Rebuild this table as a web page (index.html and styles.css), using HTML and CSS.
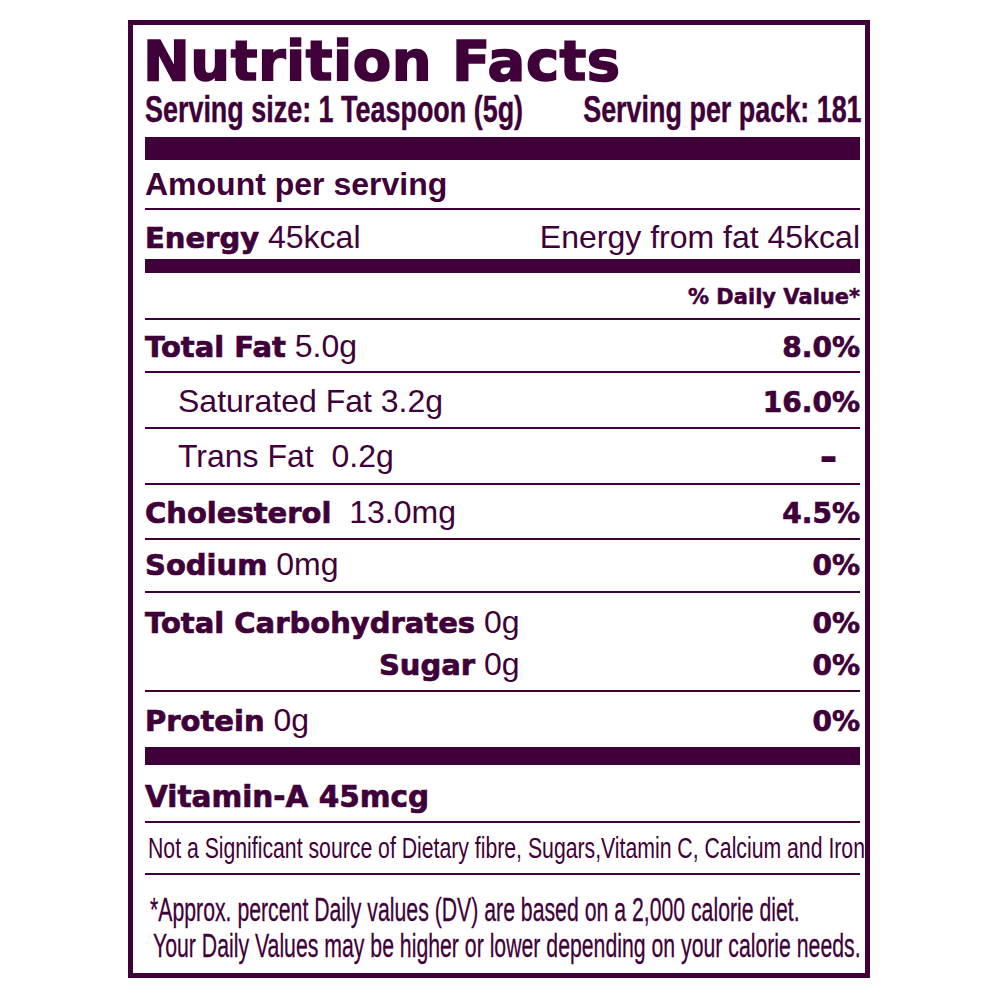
FILE: index.html
```html
<!DOCTYPE html>
<html lang="en">
<head>
<meta charset="utf-8">
<title>Nutrition Facts</title>
<link rel="stylesheet" href="styles.css">
</head>
<body>
<div class="label">
  <h1 class="title">Nutrition Facts</h1>
  <div class="serving"><span>Serving size: 1 Teaspoon (5g)</span><span>Serving per pack: 181</span></div>
  <div class="bar bar-thick"></div>
  <div class="amount">Amount per serving</div>
  <div class="row row-energy"><div><b>Energy</b> 45kcal</div><div>Energy from fat 45kcal</div></div>
  <div class="bar bar-mid"></div>
  <div class="row row-dv"><div class="dv">% Daily Value*</div></div>
  <div class="row row-fat"><div><b>Total Fat</b> 5.0g</div><div class="pct">8.0%</div></div>
  <div class="row row-sat"><div class="sub">Saturated Fat 3.2g</div><div class="pct">16.0%</div></div>
  <div class="row row-trans"><div class="sub">Trans Fat&nbsp; 0.2g</div><div class="pct dash">–</div></div>
  <div class="row row-chol"><div><b>Cholesterol</b>&nbsp; 13.0mg</div><div class="pct">4.5%</div></div>
  <div class="row row-sodium"><div><b>Sodium</b> 0mg</div><div class="pct">0%</div></div>
  <div class="carbs">
    <div class="carb-name"><b>Total Carbohydrates</b> 0g</div><div class="pct">0%</div>
    <div class="carb-name sugar"><b>Sugar</b> 0g</div><div class="pct">0%</div>
  </div>
  <div class="row row-protein"><div><b>Protein</b> 0g</div><div class="pct">0%</div></div>
  <div class="bar bar-low"></div>
  <div class="row row-vit"><div><b>Vitamin-A 45mcg</b></div></div>
  <div class="notsig"><span class="notsig-text">Not a Significant source of Dietary fibre, Sugars,Vitamin C, Calcium and Iron</span></div>
  <div class="foot">
    <p class="foot-1">*Approx. percent Daily values (DV) are based on a 2,000 calorie diet.</p>
    <p class="foot-2">Your Daily Values may be higher or lower depending on your calorie needs.</p>
  </div>
</div>
</body>
</html>
```

FILE: styles.css
```css
html, body {
  margin: 0;
  padding: 0;
  background: #ffffff;
}

.label {
  box-sizing: border-box;
  width: 742px;
  height: 958px;
  margin: 20px 0 0 128px;
  border: 5px solid #3f0039;
  padding: 8px 5px 0 12px;
  color: #3f0039;
  font-family: "Liberation Sans", Arial, sans-serif;
  display: flex;
  flex-direction: column;
  overflow: hidden;
}

.title {
  margin: 0 0 0 -2px;
  height: 56px;
  font-family: "DejaVu Sans", sans-serif;
  font-weight: 700;
  font-size: 56px;
  line-height: 56px;
  -webkit-text-stroke: 1.6px #3f0039;
  letter-spacing: 0.5px;
  white-space: nowrap;
}

.serving {
  margin-top: 4px;
  height: 34px;
  width: 958px;
  flex: none;
  align-self: flex-start;
  display: flex;
  justify-content: space-between;
  font-family: "Liberation Sans", Arial, sans-serif;
  font-weight: 700;
  font-size: 36px;
  line-height: 34px;
  white-space: nowrap;
  transform: scaleX(0.748);
  transform-origin: 0 0;
  -webkit-text-stroke: 0.4px #3f0039;
}

.bar {
  background: #3f0039;
  flex: none;
}
.bar-thick {
  margin-top: 10px;
  height: 23px;
}
.bar-mid {
  height: 14px;
}
.bar-low {
  height: 18px;
}

.amount {
  box-sizing: border-box;
  height: 50px;
  flex: none;
  padding-top: 8px;
  border-bottom: 2px solid #3f0039;
  font-weight: 700;
  font-size: 32px;
  line-height: 1;
  white-space: nowrap;
}

.row {
  box-sizing: border-box;
  flex: none;
  display: flex;
  justify-content: space-between;
  align-items: baseline;
  font-size: 32px;
  line-height: 1;
  white-space: nowrap;
  border-bottom: 2px solid #3f0039;
}

.row b,
.carbs b {
  font-family: "DejaVu Sans", sans-serif;
  font-weight: 700;
  font-size: 29px;
  -webkit-text-stroke: 0.7px #3f0039;
}

.pct {
  font-family: "DejaVu Sans", sans-serif;
  font-weight: 700;
  font-size: 28px;
  -webkit-text-stroke: 0.7px #3f0039;
}

.dash {
  font-size: 30px;
  -webkit-text-stroke: 2px #3f0039;
  padding-right: 24px;
}

.sub {
  padding-left: 33px;
}

.row-energy { height: 49px; padding-top: 11px; border-bottom: none; }
.row-dv { height: 47px; padding-top: 14px; justify-content: flex-end; }
.dv {
  font-family: "DejaVu Sans", sans-serif;
  font-weight: 700;
  font-size: 21px;
  -webkit-text-stroke: 0.5px #3f0039;
}
.row-fat { height: 53px; padding-top: 10px; }
.row-sat { height: 56px; padding-top: 12px; }
.row-trans { height: 56px; padding-top: 11px; }
.row-chol { height: 55px; padding-top: 11px; }
.row-sodium { height: 53px; padding-top: 8px; }
.row-protein { height: 55px; padding-top: 12px; border-bottom: none; }
.row-vit { height: 58px; padding-top: 15px; }
.row-vit b { font-size: 29.5px; }

.carbs {
  box-sizing: border-box;
  flex: none;
  height: 99px;
  padding-top: 13px;
  display: grid;
  grid-template-columns: max-content 1fr;
  grid-auto-rows: 42px;
  align-items: baseline;
  font-size: 32px;
  line-height: 1;
  white-space: nowrap;
  border-bottom: 2px solid #3f0039;
}
.carbs .pct {
  justify-self: end;
}
.carb-name.sugar {
  justify-self: end;
}

.notsig {
  box-sizing: border-box;
  flex: none;
  height: 52px;
  padding: 11px 0 0 3px;
  border-bottom: 2px solid #3f0039;
  font-size: 29px;
  line-height: 1;
  white-space: nowrap;
}
.notsig-text {
  display: inline-block;
  transform: scaleX(0.732);
  transform-origin: 0 0;
}

.foot {
  flex: none;
  padding-top: 16px;
  font-size: 34px;
  line-height: 36px;
  white-space: nowrap;
}
.foot p {
  margin: 0;
  width: max-content;
  transform: scaleX(0.625);
  transform-origin: 0 0;
  -webkit-text-stroke: 0.3px #3f0039;
}
.foot-1 { margin-left: 5px !important; }
.foot-2 { margin-left: 8px !important; }
```
